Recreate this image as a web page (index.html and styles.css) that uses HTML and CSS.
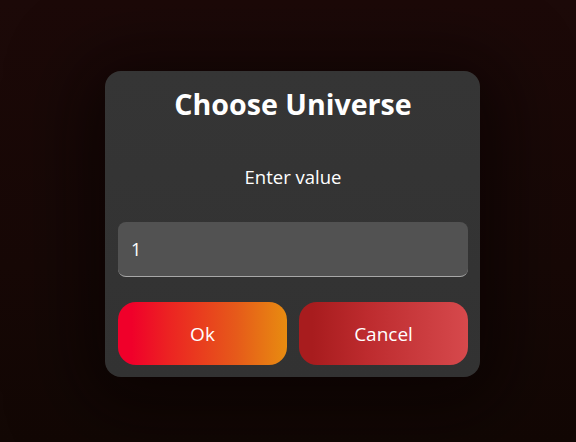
FILE: index.html
```html
<!DOCTYPE html>
<html>
<head>
<meta charset="utf-8">
<link rel="stylesheet" href="styles.css">
</head>
<body>
<div class="page">
  <div class="dialog">
    <h1 class="title">Choose Universe</h1>
    <p class="message">Enter value</p>
    <div class="field"><span class="field-value">1</span></div>
    <div class="actions">
      <button class="btn btn-ok">Ok</button>
      <button class="btn btn-cancel">Cancel</button>
    </div>
  </div>
</div>
</body>
</html>
```

FILE: styles.css
```css
html, body {
  margin: 0;
  height: 100%;
}
body {
  background: linear-gradient(180deg, #1c0908 0%, #170806 60%, #120704 100%);
  font-family: "Open Sans", "Noto Sans", sans-serif;
  color: #ffffff;
}
.page {
  display: flex;
  align-items: flex-start;
  padding: 71px 0 0 105px;
}
.dialog {
  width: 375px;
  box-sizing: border-box;
  padding: 0 12px 12px 13px;
  background: linear-gradient(180deg, #353535 0%, #323232 100%);
  border-radius: 16px;
  box-shadow: 0 12px 70px 24px rgba(5, 2, 1, 0.55);
  display: flex;
  flex-direction: column;
}
.title {
  margin: 15px 0 0;
  font-size: 28.6px;
  font-weight: 700;
  line-height: 36px;
  text-align: center;
  letter-spacing: 0;
}
.message {
  margin: 43px 0 0;
  font-size: 18.5px;
  line-height: 24px;
  text-align: center;
}
.field {
  margin-top: 33px;
  height: 55px;
  box-sizing: border-box;
  background: #525252;
  border-radius: 8px;
  border-bottom: 1px solid #a8a8a8;
  display: flex;
  align-items: center;
  padding: 0 13px;
  font-size: 18px;
}
.actions {
  margin-top: 25px;
  display: flex;
  gap: 12px;
}
.btn {
  flex: 1;
  height: 63px;
  border: none;
  border-radius: 18px;
  color: #ffffff;
  font-family: "Open Sans", "Noto Sans", sans-serif;
  font-size: 19px;
  padding: 0;
}
.btn-ok {
  background: linear-gradient(90deg, #f0002a 8%, #ec2322 30%, #e65a1a 70%, #e88c10 100%);
}
.btn-cancel {
  background: linear-gradient(90deg, #a81c1e 8%, #bd2b2e 40%, #d6494c 100%);
}
```
